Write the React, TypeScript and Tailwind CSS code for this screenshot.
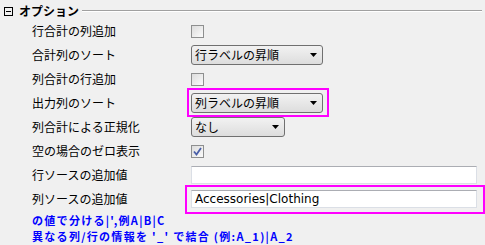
import React from 'react';

const jp = "font-['MS_UI_Gothic','Noto_Sans_CJK_JP',sans-serif]";

function CheckBox({ checked = false }: { checked?: boolean }) {
  return (
    <div className="w-[13px] h-[13px] border border-[#8e8f8f] bg-gradient-to-br from-[#dcdcdc] to-[#fbfbfb] flex items-center justify-center">
      {checked && (
        <svg width="9" height="9" viewBox="0 0 9 9">
          <path d="M1 4.5 L3.5 7.5 L8 1" stroke="#4a5fa8" strokeWidth="1.8" fill="none" />
        </svg>
      )}
    </div>
  );
}

function Combo({ label, width }: { label: string; width: string }) {
  return (
    <div
      className={`${width} h-[20px] rounded-[3px] border border-[#707070] bg-gradient-to-b from-[#f2f2f2] to-[#dddddd] flex items-center justify-between pl-[3px] pr-[5px] text-[12px] leading-none text-black ${jp}`}
    >
      <span>{label}</span>
      <svg width="7" height="4" viewBox="0 0 7 4">
        <path d="M0 0 H7 L3.5 4 Z" fill="#000" />
      </svg>
    </div>
  );
}

function TextBox({ value = '' }: { value?: string }) {
  return (
    <div className="w-[286px] h-[18px] bg-white border border-[#dbdfe6] border-t-[#abadb3] flex items-center px-[3px] text-[12px] text-black font-['Tahoma','DejaVu_Sans','Liberation_Sans',sans-serif]">
      {value}
    </div>
  );
}

function Row({ label, children }: { label: string; children: React.ReactNode }) {
  return (
    <div className="h-6 flex items-center">
      <div className={`w-[159px] pl-[32px] box-content text-[12px] text-black ${jp}`}>{label}</div>
      <div className="relative flex items-center">{children}</div>
    </div>
  );
}

export default function App() {
  return (
    <div className="w-[485px] h-[245px] bg-[#f0f0f0] overflow-hidden">
      {/* header */}
      <div className="h-[19px] flex items-center pl-[4px] pt-[3px]">
        <div className="w-[9px] h-[9px] border border-black flex items-center justify-center">
          <div className="w-[5px] h-px bg-black" />
        </div>
        <span className={`ml-[6px] text-[12px] font-bold text-black ${jp}`}>オプション</span>
        <div className="ml-[3px] w-[400px] h-[2px] border-t border-[#a0a0a0] border-b border-b-white" />
      </div>

      <Row label="行合計の列追加">
        <CheckBox />
      </Row>
      <Row label="合計列のソート">
        <Combo label="行ラベルの昇順" width="w-[132px]" />
      </Row>
      <Row label="列合計の行追加">
        <CheckBox />
      </Row>
      <Row label="出力列のソート">
        <Combo label="列ラベルの昇順" width="w-[132px]" />
        <div className="absolute left-[-4px] top-[-5px] w-[142px] h-[29px] border-2 border-[#ff00ff]" />
      </Row>
      <Row label="列合計による正規化">
        <Combo label="なし" width="w-[94px]" />
      </Row>
      <Row label="空の場合のゼロ表示">
        <CheckBox checked />
      </Row>
      <Row label="行ソースの追加値">
        <TextBox />
      </Row>
      <Row label="列ソースの追加値">
        <TextBox value="Accessories|Clothing" />
        <div className="absolute left-[-6px] top-[-5px] w-[300px] h-[29px] border-2 border-[#ff00ff]" />
      </Row>

      <div className={`pl-[32px] pt-[1px] text-[11px] leading-[16px] tracking-[1.3px] font-bold text-[#0000ff] ${jp}`}>
        <div>の値で分ける|',例A|B|C</div>
        <div>異なる列/行の情報を '_' で結合 (例:A_1)|A_2</div>
      </div>
    </div>
  );
}
